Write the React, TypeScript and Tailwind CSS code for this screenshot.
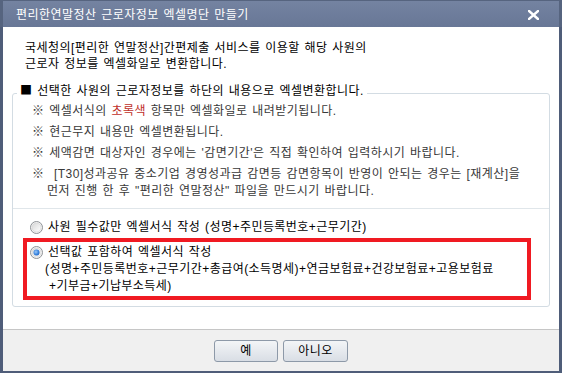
import React from "react";

function Radio({ checked }: { checked?: boolean }) {
  return (
    <svg width="13" height="13" viewBox="0 0 13 13" className="shrink-0">
      <defs>
        <linearGradient id={checked ? "rgc" : "rgu"} x1="0" y1="0" x2="1" y2="1">
          <stop offset="0" stopColor="#d8d8d8" />
          <stop offset="1" stopColor="#ffffff" />
        </linearGradient>
        <radialGradient id="rdot" cx="0.4" cy="0.4" r="0.7">
          <stop offset="0" stopColor="#9cc8f8" />
          <stop offset="0.6" stopColor="#3a86e0" />
          <stop offset="1" stopColor="#1c5bb8" />
        </radialGradient>
      </defs>
      <circle cx="6.5" cy="6.5" r="6" fill="#f4f4f4" stroke="#8e9296" strokeWidth="1" />
      <circle cx="6.5" cy="6.5" r="4.5" fill={`url(#${checked ? "rgc" : "rgu"})`} stroke="#d2d2d2" strokeWidth="0.6" />
      {checked && <circle cx="6.5" cy="6.5" r="3" fill="url(#rdot)" />}
    </svg>
  );
}

export default function App() {
  return (
    <div className="w-[562px] h-[373px] flex flex-col font-['Liberation_Sans','Noto_Sans_CJK_KR',sans-serif] [word-spacing:1px] tracking-[0.45px] text-[12px] text-black select-none">
      <div className="h-[27px] shrink-0 flex items-center justify-between pl-[16px] pr-[20px] pt-[2px] bg-gradient-to-b from-[#7483a1] to-[#687796] text-white border-x-[3px] border-t border-[#56647f]">
        <span className="leading-[16px] -ml-[3px]">편리한연말정산 근로자정보 엑셀명단 만들기</span>
        <svg width="11" height="10" viewBox="0 0 11 10" className="-mt-[1px]">
          <path d="M1 1 L10 9 M10 1 L1 9" stroke="#ffffff" strokeWidth="2.4" strokeLinecap="square" />
        </svg>
      </div>
      <div className="flex-1 flex flex-col bg-[#4f5d79] px-[3px] pb-[2px]">
        <div className="flex-1 flex flex-col bg-white">
          <div className="pt-[13px] pl-[22px] leading-[16px] whitespace-nowrap">
            <p>국세청의[편리한 연말정산]간편제출 서비스를 이용할 해당 사원의</p>
            <p>근로자 정보를 엑셀화일로 변환합니다.</p>
          </div>
          <fieldset className="mt-[10px] mx-[9px] border border-[#d3dce3] rounded-[3px] pb-[6px]">
            <legend className="ml-[4px] pl-[3px] pr-[3px] leading-[16px] pb-[6px] whitespace-nowrap">
              <span className="font-['Noto_Sans_CJK_KR',sans-serif]">■</span> 선택한 사원의 근로자정보를 하단의 내용으로 엑셀변환합니다.
            </legend>
            <div className="-mt-[2px] pl-[19px] flex flex-col gap-[4px] leading-[17px] text-[#383838] whitespace-nowrap">
              <p>
                ※ 엑셀서식의 <span className="text-[#c0302a]">초록색</span> 항목만 엑셀화일로 내려받기됩니다.
              </p>
              <p>※ 현근무지 내용만 엑셀변환됩니다.</p>
              <p>※ 세액감면 대상자인 경우에는 '감면기간'은 직접 확인하여 입력하시기 바랍니다.</p>
              <div>
                <p>※&nbsp; [T30]성과공유 중소기업 경영성과급 감면등 감면항목이 반영이 안되는 경우는 [재계산]을</p>
                <p className="pl-[15px]">먼저 진행 한 후 "편리한 연말정산" 파일을 만드시기 바랍니다.</p>
              </div>
            </div>
            <div className="mt-[8px] h-px bg-[#e0e6ea]" />
            <div className="mt-[10px] pl-[17px] flex items-center gap-[5px] leading-[16px] whitespace-nowrap">
              <Radio />
              <span>사원 필수값만 엑셀서식 작성 (성명+주민등록번호+근무기간)</span>
            </div>
            <div className="mt-[3px] ml-[10px] w-[508px] h-[62px] border-[4px] border-[#f01a22] pt-[2px] pl-[3px] leading-[17px] whitespace-nowrap">
              <div className="flex items-center gap-[5px]">
                <Radio checked />
                <span>선택값 포함하여 엑셀서식 작성</span>
              </div>
              <p className="pl-[15px]">(성명+주민등록번호+근무기간+총급여(소득명세)+연금보험료+건강보험료+고용보험료</p>
              <p className="pl-[19px]">+기부금+기납부소득세)</p>
            </div>
          </fieldset>
          <div className="flex-1" />
        </div>
        <div className="h-[42px] shrink-0 bg-[#f0f0f0] border-t border-[#c6c6c6] flex items-center justify-center gap-[5px]">
          <button className="w-[64px] h-[22px] rounded-[3px] border border-[#8d99a8] bg-gradient-to-b from-[#f3f5f7] to-[#d9dee5] leading-[20px] text-black">
            예
          </button>
          <button className="w-[65px] h-[22px] rounded-[3px] border border-[#8d99a8] bg-gradient-to-b from-[#f3f5f7] to-[#d9dee5] leading-[20px] text-black">
            아니오
          </button>
        </div>
      </div>
    </div>
  );
}
